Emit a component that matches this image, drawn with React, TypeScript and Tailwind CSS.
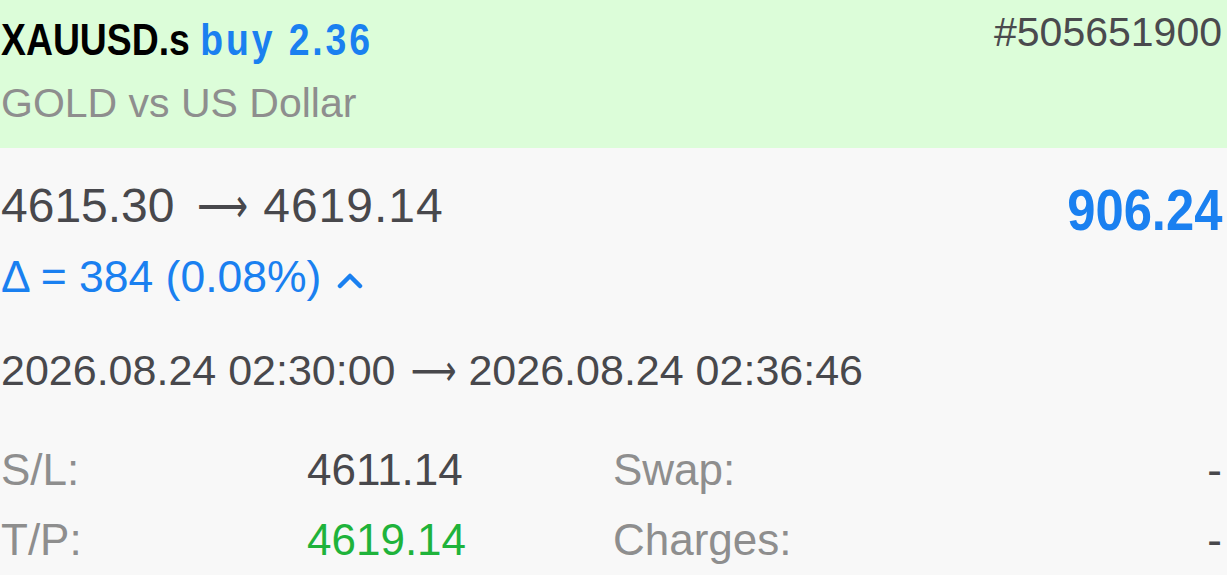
export default function App() {
  const sans = "font-['Liberation_Sans',Arial,sans-serif]";
  const bold = "font-['Liberation_Sans',Arial,sans-serif] font-bold";
  const arrow = "inline-block origin-left scale-x-[0.74] font-['DejaVu_Sans',sans-serif] font-normal";

  return (
    <div className={`w-[1227px] h-[575px] overflow-hidden bg-[#f8f8f8] ${sans}`}>
      {/* Header: symbol, side, volume, ticket */}
      <div className="h-[148px] bg-[#dcfdd9] pl-[1px] pr-[5px]">
        <div className="flex items-start justify-between pt-[12px]">
          <div
            className={`mt-[5px] inline-block origin-left scale-x-[0.83] whitespace-nowrap text-[45px] leading-none text-black ${bold}`}
          >
            XAUUSD.s <span className="tracking-[3.5px] text-[#1a80f0]">buy 2.36</span>
          </div>
          <div className="text-[41px] leading-none text-[#4a4a4e]">#505651900</div>
        </div>
        <div className="mt-[21px] text-[41px] leading-none text-[#8e8e8e]">GOLD vs US Dollar</div>
      </div>

      {/* Body */}
      <div className="pl-[1px] pr-[5px]">
        <div className="flex items-start justify-between pt-[33px]">
          <div className="whitespace-nowrap text-[48px] leading-none text-[#48484c]">
            4615.30{" "}
            <span className="ml-[9px] mr-[3px] inline-block w-[50px] whitespace-nowrap">
              <span className={arrow}>⟶</span>
            </span>{" "}
            <span className="tracking-[1px]">4619.14</span>
          </div>
          <div
            className={`inline-block origin-right scale-x-[0.875] text-[58px] leading-none text-[#1a80f0] ${bold}`}
          >
            906.24
          </div>
        </div>

        <div className="mt-[16px] flex items-center text-[44.5px] leading-none text-[#1a80f0]">
          <span>Δ = 384 (0.08%)</span>
          <svg className="ml-[16px] mt-[6px]" width="26" height="18" viewBox="0 0 26 18">
            <polyline
              points="3,15 13,5 23,15"
              fill="none"
              stroke="#1a80f0"
              strokeWidth="4.5"
              strokeLinecap="round"
              strokeLinejoin="round"
            />
          </svg>
        </div>

        <div className="mt-[49px] whitespace-nowrap text-[43px] leading-none text-[#48484c]">
          2026.08.24 02:30:00{" "}
          <span className="ml-[3px] inline-block w-[46px] whitespace-nowrap">
            <span className={arrow}>⟶</span>
          </span>{" "}
          2026.08.24 02:36:46
        </div>

        <div className="mt-[56px] grid grid-cols-[306px_306px_1fr_auto] gap-y-[26px] text-[44px] leading-none">
          <span className="text-[#8e8e8e]">S/L:</span>
          <span className="text-[#48484c]">4611.14</span>
          <span className="text-[#8e8e8e]">Swap:</span>
          <span className="text-[#48484c]">-</span>
          <span className="text-[#8e8e8e]">T/P:</span>
          <span className="text-[#1fb33b]">4619.14</span>
          <span className="text-[#8e8e8e]">Charges:</span>
          <span className="text-[#48484c]">-</span>
        </div>
      </div>
    </div>
  );
}
